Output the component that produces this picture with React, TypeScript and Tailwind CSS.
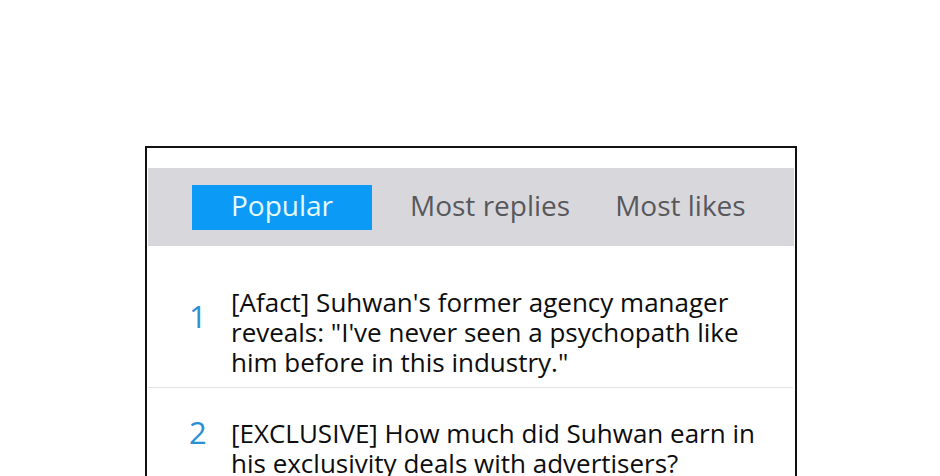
import React from "react";

const items = [
  {
    n: "1",
    text: "[Afact] Suhwan's former agency manager reveals: \"I've never seen a psychopath like him before in this industry.\"",
    numCls: "mt-[14px]",
    rowCls: "pt-[33px] pb-[10px]",
  },
  {
    n: "2",
    text: "[EXCLUSIVE] How much did Suhwan earn in his exclusivity deals with advertisers?",
    numCls: "-mt-[1px]",
    rowCls: "pt-[30px] pb-[8px]",
  },
];

export default function App() {
  return (
    <div
      className="w-[940px] h-[476px] bg-white overflow-hidden"
      style={{ fontFamily: '"Open Sans", "Noto Sans", sans-serif' }}
    >
      <div className="ml-[145px] mt-[146px] w-[652px] h-[400px] border-2 border-[#111] px-px pt-[20px]">
        <div className="h-[78px] bg-[#d8d8dc] flex items-center pl-[44px]">
          <div className="w-[180px] h-[45px] bg-[#0b9bf6] flex items-center justify-center pb-[4px] text-[28px] text-[#e6f9ff]">
            Popular
          </div>
          <div className="ml-[38px] pb-[4px] text-[28px] text-[#58585c]">Most replies</div>
          <div className="ml-[45px] pb-[4px] text-[28px] text-[#58585c]">Most likes</div>
        </div>
        <div className="pt-2">
          {items.map((it) => (
            <div
              key={it.n}
              className={`flex border-b border-[#e2e2e2] mr-[1px] ${it.rowCls}`}
            >
              <div className={`w-[83px] pl-[41px] text-[31px] leading-[30px] text-[#2a8fd4] ${it.numCls}`}>
                {it.n}
              </div>
              <div className="w-[545px] text-[26px] leading-[30px] text-[#0d0d0d]">
                {it.text}
              </div>
            </div>
          ))}
        </div>
      </div>
    </div>
  );
}
